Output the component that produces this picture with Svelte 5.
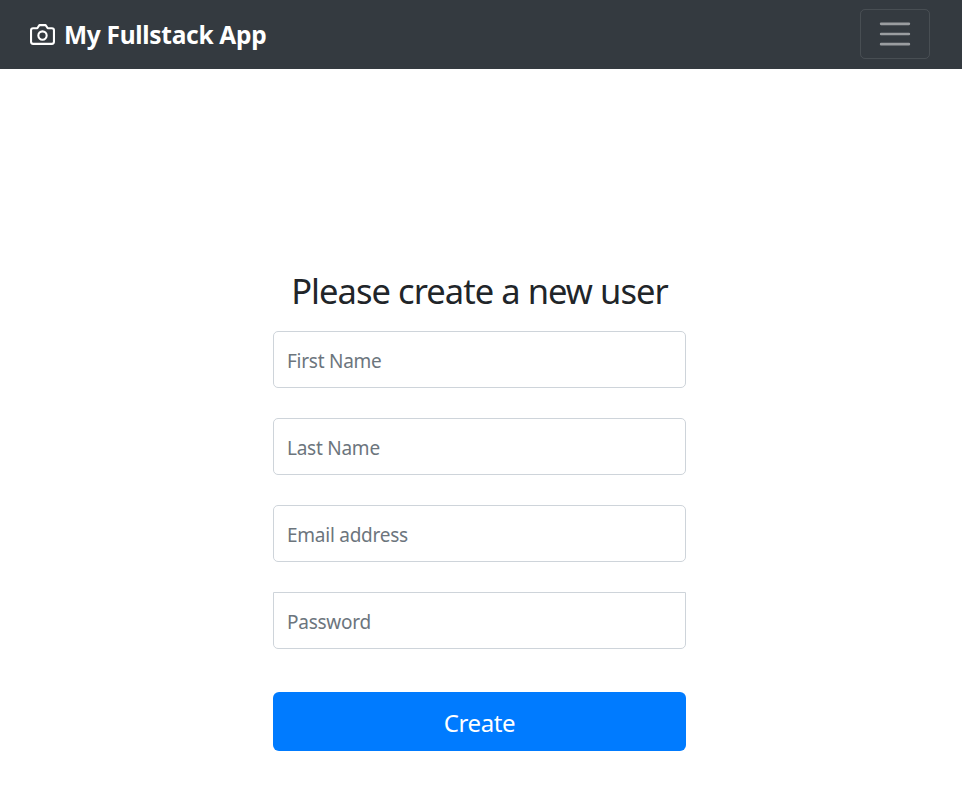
<script>
  const fields = [
    { label: 'First Name', type: 'text' },
    { label: 'Last Name', type: 'text' },
    { label: 'Email address', type: 'email' },
    { label: 'Password', type: 'password' }
  ];
</script>

<header>
  <a class="brand" href="#top">
    <svg width="25" height="25" viewBox="0 0 24 24" fill="none" stroke="currentColor" stroke-width="2" stroke-linecap="round" stroke-linejoin="round">
      <path d="M23 19a2 2 0 0 1-2 2H3a2 2 0 0 1-2-2V8a2 2 0 0 1 2-2h4l2-3h6l2 3h4a2 2 0 0 1 2 2z" />
      <circle cx="12" cy="13" r="4" />
    </svg>
    <strong>My Fullstack App</strong>
  </a>
  <button class="toggler" type="button" aria-label="Toggle navigation">
    <svg width="38" height="38" viewBox="0 0 30 30" fill="none" stroke="rgba(255,255,255,.5)" stroke-width="2" stroke-linecap="round" stroke-miterlimit="10">
      <path d="M4 7h22M4 15h22M4 23h22" />
    </svg>
  </button>
</header>

<main>
  <form>
    <h1>Please create a new user</h1>
    {#each fields as field}
      <input class={field.type} type={field.type} placeholder={field.label} aria-label={field.label} />
    {/each}
    <button class="submit" type="button">Create</button>
  </form>
</main>

<style>
  :global(body) {
    background: #fff;
    color: #212529;
    font-family: "Noto Sans", "Open Sans", sans-serif;
  }
  header {
    box-sizing: border-box;
    height: 69px;
    padding: 0 32px 0 30px;
    display: flex;
    align-items: center;
    justify-content: space-between;
    background: #343a40;
  }
  .brand {
    display: flex;
    align-items: center;
    gap: 9px;
    color: #fff;
    text-decoration: none;
  }
  strong {
    font-size: 24.5px;
    line-height: 36px;
    font-weight: 700;
    letter-spacing: -0.3px;
    white-space: nowrap;
  }
  .toggler {
    box-sizing: border-box;
    width: 70px;
    height: 50px;
    margin-top: -1px;
    padding: 0;
    display: flex;
    align-items: center;
    justify-content: center;
    background: transparent;
    border: 1px solid rgba(255, 255, 255, 0.1);
    border-radius: 5px;
  }
  main {
    padding-top: 196px;
  }
  form {
    width: 413px;
    margin-left: 273px;
    display: flex;
    flex-direction: column;
  }
  h1 {
    margin: 0 0 14px;
    font-size: 34.5px;
    line-height: 52px;
    font-weight: 400;
    letter-spacing: -0.95px;
    text-align: center;
    white-space: nowrap;
  }
  input {
    box-sizing: border-box;
    width: 100%;
    height: 57px;
    margin: 0 0 30px;
    padding: 3px 13px 0;
    border: 1px solid #ced4da;
    border-radius: 5px;
    background: #fff;
    font: 400 19px "Noto Sans", "Open Sans", sans-serif;
    letter-spacing: -0.25px;
    outline: 0;
  }
  input::placeholder {
    color: #6c757d;
    opacity: 1;
  }
  input.password {
    margin-bottom: 43px;
    border-top-left-radius: 0;
    border-top-right-radius: 0;
  }
  .submit {
    height: 59px;
    padding: 1px 0 0;
    border: 0;
    border-radius: 6px;
    background: #007bff;
    color: #fff;
    font: 400 24px "Noto Sans", "Open Sans", sans-serif;
    letter-spacing: -0.4px;
  }
</style>
